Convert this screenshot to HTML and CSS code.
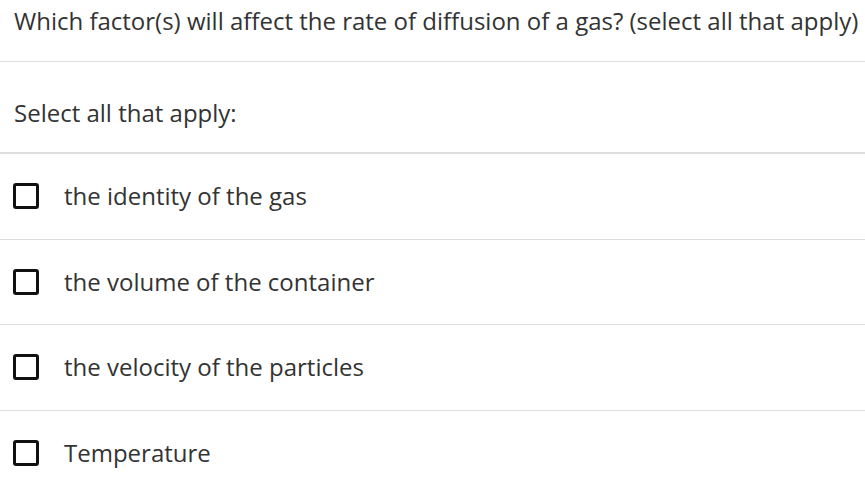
FILE: index.html
```html
<!DOCTYPE html>
<html>
<head>
<meta charset="utf-8">
<link rel="stylesheet" href="styles.css">
</head>
<body>
<div class="question">Which factor(s) will affect the rate of diffusion of a gas? (select all that apply)</div>
<div class="prompt">Select all that apply:</div>
<ul class="options">
  <li class="option"><span class="box"></span><span class="label">the identity of the gas</span></li>
  <li class="option"><span class="box"></span><span class="label">the volume of the container</span></li>
  <li class="option"><span class="box"></span><span class="label">the velocity of the particles</span></li>
  <li class="option"><span class="box"></span><span class="label">Temperature</span></li>
</ul>
</body>
</html>
```
FILE: styles.css
```css
html, body {
  margin: 0;
  padding: 0;
  background: #fff;
}
body {
  font-family: "Open Sans", "Noto Sans", sans-serif;
  font-size: 24px;
  line-height: 32px;
  color: #333;
  width: 865px;
  overflow: hidden;
}
.question {
  padding: 5px 0 24px 14px;
  white-space: nowrap;
}
.prompt {
  border-top: 1px solid #ddd;
  border-bottom: 2px solid #ddd;
  padding: 35px 0 23px 14px;
}
.options {
  list-style: none;
  margin: 0;
  padding: 0;
}
.option {
  height: 84.5px;
  display: flex;
  align-items: center;
  padding-left: 13px;
}
.option + .option {
  border-top: 1px solid #ddd;
}
.box {
  width: 20px;
  height: 20px;
  border: 3px solid #111;
  border-radius: 3px;
  flex: none;
}
.label {
  margin-left: 25px;
}
```
